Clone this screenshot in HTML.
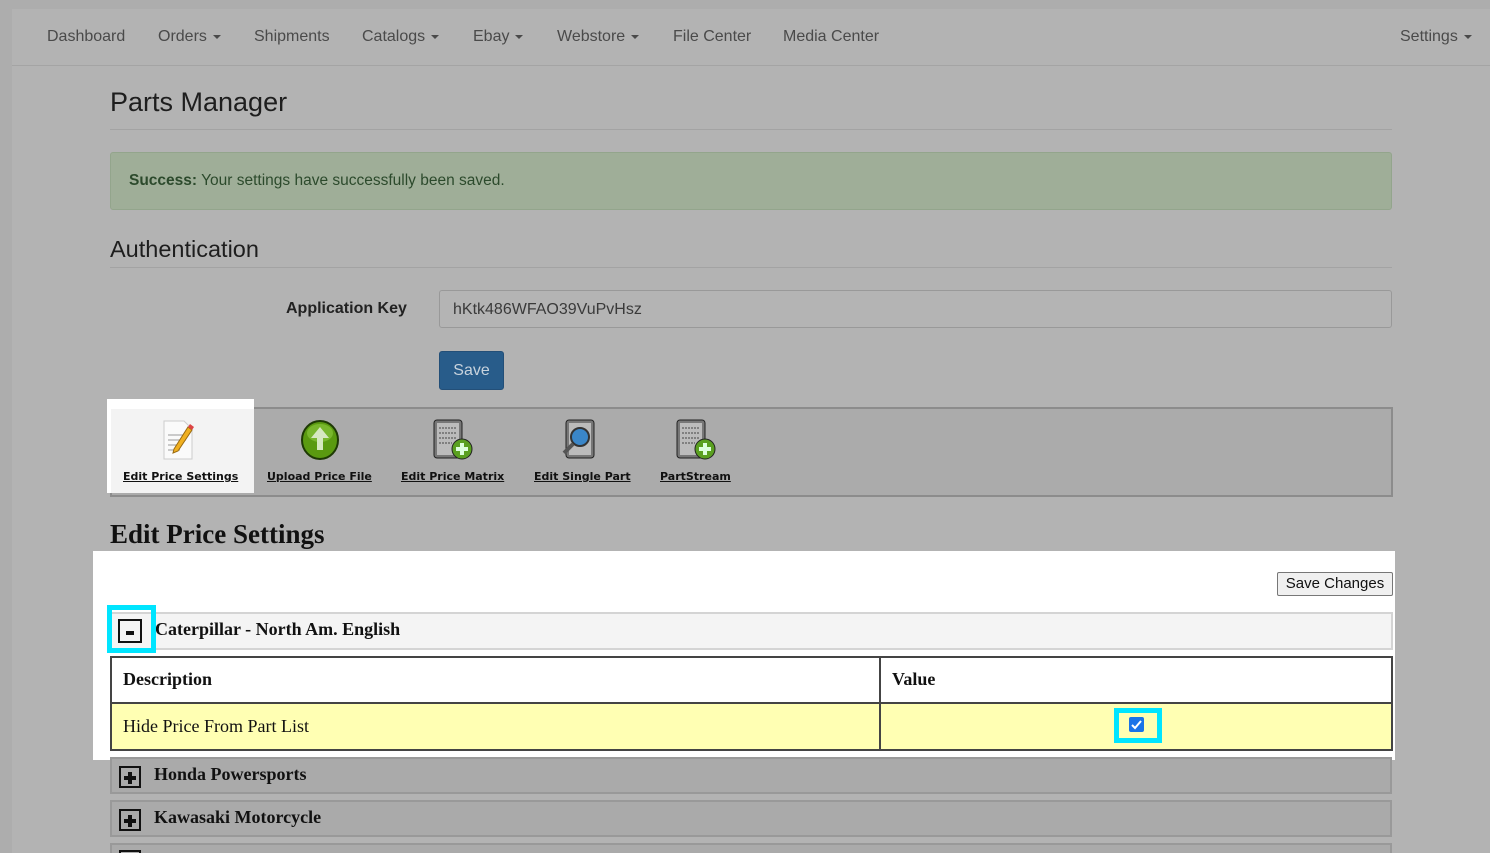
<!DOCTYPE html>
<html><head><style>
*{margin:0;padding:0;box-sizing:border-box}
html{width:1490px;height:853px;overflow:hidden}
body{width:1490px;height:853px;background:#adadad;position:relative;overflow:hidden;font-family:"Liberation Sans",sans-serif}
.a{position:absolute}
.nav{left:12px;top:9px;width:1478px;height:57px;background:#b3b3b3;border-bottom:1px solid #a4a4a4}
.nav span{position:absolute;top:19px;font-size:16px;color:#4a4a4a}
.car{display:inline-block;border-top:4px solid #4a4a4a;border-left:4px solid transparent;border-right:4px solid transparent;vertical-align:middle;margin-left:6px}
.page{left:12px;top:66px;width:1478px;height:787px;background:#b3b3b3}
.tb span{position:absolute;top:63px;font-size:11px;font-weight:bold;text-decoration:underline;color:#111;font-family:"DejaVu Sans",sans-serif}
.ser{font-family:"Liberation Serif",serif}
.grp{left:110px;width:1282px;background:#aaa;border:2px solid #999;height:37px}
.pb{position:absolute;left:7px;top:7px;width:22px;height:22px;border:2px solid #111;background:#aaa}
</style></head><body>
<div class="a nav">
<span style="left:35px">Dashboard</span>
<span style="left:146px">Orders<i class="car"></i></span>
<span style="left:242px">Shipments</span>
<span style="left:350px">Catalogs<i class="car"></i></span>
<span style="left:461px">Ebay<i class="car"></i></span>
<span style="left:545px">Webstore<i class="car"></i></span>
<span style="left:661px">File Center</span>
<span style="left:771px">Media Center</span>
<span style="left:1388px">Settings<i class="car"></i></span>
</div>
<div class="a page"></div>
<div class="a" style="left:110px;top:87px;font-size:27px;color:#1e1e1e">Parts Manager</div>
<div class="a" style="left:110px;top:129px;width:1282px;height:1px;background:#a3a3a3"></div>
<div class="a" style="left:110px;top:152px;width:1282px;height:58px;background:#9fae98;border:1px solid #93a58c;border-radius:3px;font-size:15.5px;color:#2c4a2c;padding:19px 18px"><b>Success:</b> Your settings have successfully been saved.</div>
<div class="a" style="left:110px;top:236px;font-size:23.5px;color:#1e1e1e">Authentication</div>
<div class="a" style="left:110px;top:267px;width:1282px;height:1px;background:#a3a3a3"></div>
<div class="a" style="left:286px;top:300px;font-size:16px;font-weight:bold;color:#222">Application Key</div>
<div class="a" style="left:439px;top:290px;width:953px;height:38px;background:#b4b4b4;border:1px solid #999;border-radius:3px;font-size:16px;color:#3a3a3a;padding:10px 13px">hKtk486WFAO39VuPvHsz</div>
<div class="a" style="left:439px;top:351px;width:65px;height:39px;background:#285c8a;border:1px solid #234f78;border-radius:3px;color:#c8d3dd;font-size:16px;text-align:center;line-height:38px">Save</div>
<div class="a tb" style="left:110px;top:407px;width:1283px;height:90px;background:#ababab;border:2px solid #8c8c8c"></div>
<div class="a" style="left:107px;top:399px;width:147px;height:94px;background:#fff"></div>
<div class="a" style="left:111px;top:409px;width:143px;height:84px;background:#f3f3f3"></div>
<div class="a tb" style="left:110px;top:407px;width:700px;height:90px">
<span style="left:13px">Edit Price Settings</span>
<span style="left:157px">Upload Price File</span>
<span style="left:291px">Edit Price Matrix</span>
<span style="left:424px">Edit Single Part</span>
<span style="left:550px">PartStream</span>
<svg class="a" style="left:50px;top:12px" width="40" height="42"><path d="M4 2h20l8 8v30H4z" fill="#fafafa" stroke="#ccc"/><g stroke="#999"><line x1="8" y1="16" x2="26" y2="16"/><line x1="8" y1="21" x2="26" y2="21"/><line x1="8" y1="26" x2="22" y2="26"/><line x1="8" y1="31" x2="20" y2="31"/></g><path d="M14 30l14-22 4 3-14 21-5 2z" fill="#f0b020" stroke="#9a6a10"/><path d="M28 8l2-3 4 3-2 3z" fill="#d44"/></svg>
<svg class="a" style="left:190px;top:12px" width="40" height="42"><ellipse cx="20" cy="21" rx="18" ry="19" fill="#5a9a10" stroke="#1e3a05" stroke-width="2"/><ellipse cx="20" cy="14" rx="13" ry="9" fill="#8ccc40" opacity=".6"/><path d="M20 8l-9 11h6v12h6V19h6z" fill="#d6e8c0"/></svg>
<svg class="a" style="left:322px;top:12px" width="44" height="44"><rect x="2" y="1" width="28" height="38" rx="3" fill="#777" stroke="#222"/><rect x="5" y="4" width="22" height="32" fill="#bbb"/><g stroke="#444" stroke-dasharray="2 1"><line x1="7" y1="9" x2="25" y2="9"/><line x1="7" y1="14" x2="25" y2="14"/><line x1="7" y1="19" x2="25" y2="19"/><line x1="7" y1="24" x2="20" y2="24"/></g><circle cx="30" cy="30" r="10" fill="#5aa020" stroke="#222"/><path d="M30 24v12M24 30h12" stroke="#dfd" stroke-width="4"/></svg>
<svg class="a" style="left:450px;top:12px" width="44" height="44"><rect x="6" y="1" width="28" height="38" rx="3" fill="#777" stroke="#222"/><rect x="9" y="4" width="22" height="32" fill="#bbb"/><circle cx="20" cy="18" r="9" fill="#3a86c8" stroke="#333" stroke-width="2"/><path d="M13 25l-9 9" stroke="#555" stroke-width="4"/></svg>
<svg class="a" style="left:565px;top:12px" width="44" height="44"><rect x="2" y="1" width="28" height="38" rx="3" fill="#777" stroke="#222"/><rect x="5" y="4" width="22" height="32" fill="#bbb"/><g stroke="#444" stroke-dasharray="2 1"><line x1="7" y1="9" x2="25" y2="9"/><line x1="7" y1="14" x2="25" y2="14"/><line x1="7" y1="19" x2="25" y2="19"/><line x1="7" y1="24" x2="20" y2="24"/></g><circle cx="30" cy="30" r="10" fill="#5aa020" stroke="#222"/><path d="M30 24v12M24 30h12" stroke="#dfd" stroke-width="4"/></svg>
</div>
<div class="a ser" style="left:110px;top:519px;font-size:27px;font-weight:bold;color:#111">Edit Price Settings</div>
<div class="a" style="left:93px;top:551px;width:1302px;height:209px;background:#fff"></div>
<div class="a" style="left:1277px;top:572px;width:116px;height:24px;background:#f0f0f0;border:1px solid #777;border-radius:2px;font-size:15px;text-align:center;line-height:22px;color:#111">Save Changes</div>
<div class="a" style="left:110px;top:612px;width:1283px;height:38px;background:#f4f4f4;border:2px solid #d4d4d4"></div>
<div class="a ser" style="left:155px;top:619px;font-size:18px;font-weight:bold;color:#111">Caterpillar - North Am. English</div>
<div class="a" style="left:107px;top:605px;width:49px;height:48px;border:5px solid #00e5ff"></div>
<div class="a" style="left:118px;top:619px;width:24px;height:24px;border:2px solid #111;background:#f4f4f4"><div style="position:absolute;left:6px;top:10px;width:8px;height:4px;background:#111"></div></div>
<div class="a" style="left:110px;top:656px;width:1283px;height:95px;border:2px solid #444;background:#fff"></div>
<div class="a" style="left:112px;top:702px;width:1279px;height:47px;background:#ffffb3;border-top:2px solid #444"></div>
<div class="a" style="left:879px;top:658px;width:2px;height:91px;background:#444"></div>
<div class="a ser" style="left:123px;top:669px;font-size:18px;font-weight:bold;color:#111">Description</div>
<div class="a ser" style="left:892px;top:669px;font-size:18px;font-weight:bold;color:#111">Value</div>
<div class="a ser" style="left:123px;top:716px;font-size:18px;color:#111">Hide Price From Part List</div>
<div class="a" style="left:1114px;top:708px;width:48px;height:35px;border:5px solid #00e5ff"></div>
<div class="a" style="left:1129px;top:717px;width:15px;height:15px;background:#1a73e8;border-radius:2px"><svg width="15" height="15"><path d="M3 8l3 3 6-7" stroke="#fff" stroke-width="2" fill="none"/></svg></div>
<div class="a grp" style="top:757px"><div class="pb"><div style="position:absolute;left:3px;top:8px;width:12px;height:4px;background:#111"></div><div style="position:absolute;left:7px;top:4px;width:4px;height:12px;background:#111"></div></div><div class="ser" style="position:absolute;left:42px;top:5px;font-size:18px;font-weight:bold;color:#111">Honda Powersports</div></div>
<div class="a grp" style="top:800px"><div class="pb"><div style="position:absolute;left:3px;top:8px;width:12px;height:4px;background:#111"></div><div style="position:absolute;left:7px;top:4px;width:4px;height:12px;background:#111"></div></div><div class="ser" style="position:absolute;left:42px;top:5px;font-size:18px;font-weight:bold;color:#111">Kawasaki Motorcycle</div></div>
<div class="a" style="left:110px;top:843px;width:1282px;height:10px;background:#aaa;border:2px solid #999;border-bottom:none"><div style="position:absolute;left:7px;top:5px;width:22px;height:5px;border:2px solid #111;border-bottom:none"></div></div>
</body></html>
